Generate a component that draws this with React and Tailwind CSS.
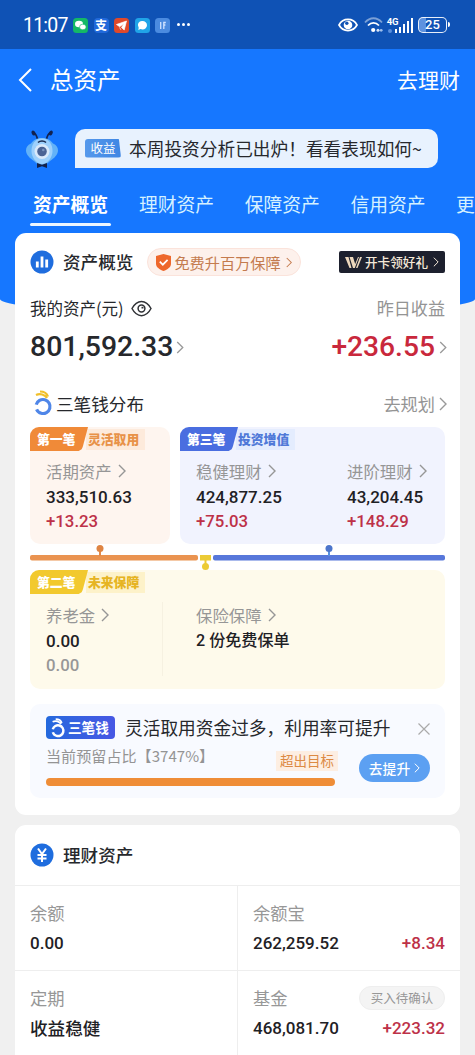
import React from 'react'

const Chevron = ({ className }) => (
    <svg viewBox="0 0 8 14" fill="none" stroke="currentColor" className={className}>
        <path d="M1 1l6 6-6 6" strokeWidth="1.4" />
    </svg>
)

const Num = ({ className = '', children }) => (
    <span className={`font-[Roboto,'Noto_Sans_CJK_SC',sans-serif] font-medium ${className}`}>{children}</span>
)

const StatusBar = () => (
    <div className="h-[49px] bg-[#0f52b5] flex items-center pl-[23px] pr-[25px] text-white">
        <span className="font-[Roboto,sans-serif] text-[19.5px] w-[45px] whitespace-nowrap tracking-[-0.8px] mt-0.5">11:07</span>
        <div className="flex items-center gap-[5.5px] ml-[5px] mt-px">
            <svg viewBox="0 0 15 15" className="w-[15px] h-[15px]">
                <rect width="15" height="15" rx="3.5" fill="#14b866" />
                <ellipse cx="6" cy="6" rx="4" ry="3.3" fill="#fff" />
                <ellipse cx="9.8" cy="9" rx="3.3" ry="2.8" fill="#fff" stroke="#14b866" strokeWidth=".6" />
            </svg>
            <div className="w-[15px] h-[15px] rounded-[4px] bg-[#2169da] flex items-center justify-center text-[12px] leading-none font-bold">支</div>
            <svg viewBox="0 0 15 15" className="w-[15px] h-[15px]">
                <rect width="15" height="15" rx="3.5" fill="#e0492a" />
                <path d="M2.5 6.5L12.5 3l-2.3 9-2.7-2.5 2.5-4-4.3 3.2zM5.6 9.5l1.3 2.3" fill="#fff" stroke="#fff" strokeWidth=".7" />
            </svg>
            <svg viewBox="0 0 15 15" className="w-[15px] h-[15px]">
                <rect width="15" height="15" rx="3.5" fill="#20a4e8" />
                <path d="M7.5 3a4.5 4.2 0 110 8.4 5 5 0 01-2-.4L3.3 12l.4-2.3A4.2 4.2 0 017.5 3z" fill="#fff" />
            </svg>
            <svg viewBox="0 0 15 15" className="w-[15px] h-[15px]">
                <rect width="15" height="15" rx="3.5" fill="#4b8be0" />
                <path d="M5.7 4v7M8.8 11V4.500h2M8.8 7h1.6" fill="none" stroke="#cfe2ff" strokeWidth="1.3" />
            </svg>
        </div>
        <div className="flex gap-[2.5px] ml-[7px]">
            <i className="w-[2.5px] h-[2.5px] rounded-full bg-white" />
            <i className="w-[2.5px] h-[2.5px] rounded-full bg-white" />
            <i className="w-[2.5px] h-[2.5px] rounded-full bg-white" />
        </div>
        <svg viewBox="0 0 20 14" className="w-5 h-[14px] ml-auto" fill="none" stroke="#fff">
            <path d="M1 7c4-7.4 14-7.4 18 0-4 7.4-14 7.4-18 0z" strokeWidth="1.7" />
            <circle cx="10" cy="7" r="4.3" fill="#fff" stroke="none" />
            <circle cx="8.8" cy="5.2" r="1.7" fill="#0f52b5" stroke="none" />
        </svg>
        <svg viewBox="0 0 19 16" className="w-[19px] h-4 ml-[6px]" fill="none" stroke="#fff" strokeWidth="1.8">
            <path d="M1 5.5C6-.2 13-.2 18 5.5" opacity=".45" />
            <path d="M4 8.5c3.4-3.6 7.6-3.6 11 0" />
            <circle cx="9.2" cy="13" r="2.1" fill="#fff" stroke="none" />
            <circle cx="14" cy="13.3" r="1.5" fill="#d7e4f8" stroke="none" />
            <circle cx="17.2" cy="13.3" r="1.4" fill="#9fbfec" stroke="none" />
        </svg>
        <div className="flex items-end ml-[4px] h-4">
            <div className="w-[11px] h-4 flex flex-col justify-between">
                <span className="font-[Roboto,sans-serif] font-bold text-[9.5px] leading-[9px]">4G</span>
                <i className="w-1 h-1 ml-px bg-[#5a8fdd] rounded-sm" />
            </div>
            <div className="flex items-end gap-[1.6px] -ml-[3px]">
                <i className="w-[2.4px] h-[3.5px] bg-white" />
                <i className="w-[2.4px] h-[6px] bg-white" />
                <i className="w-[2.4px] h-[8.5px] bg-white" />
                <i className="w-[2.4px] h-[11.5px] bg-white" />
                <i className="w-[2.4px] h-[15px] bg-white" />
            </div>
        </div>
        <div className="flex items-center ml-[5px]">
            <div className="w-[29px] h-4 rounded-[5px] border-[1.5px] border-white/90 bg-linear-to-r from-[#5d92df] from-25% to-transparent to-25% flex items-center justify-center font-[Roboto,sans-serif] font-medium text-[13px]">25</div>
            <i className="w-[2px] h-[5px] bg-white ml-px rounded-r" />
        </div>
    </div>
)

const Mascot = () => (
    <svg viewBox="0 0 34 40" className="w-[34px] h-10">
        <path d="M12.500 10C11.500 6 10.500 4.500 8.500 3.500M21.500 10c1-4 2-5.500 4-6.500" fill="none" stroke="#12224f" strokeWidth="1.700" />
        <ellipse cx="8.500" cy="4" rx="1.800" ry="2.600" transform="rotate(-30 8.500 4)" fill="#12224f" />
        <ellipse cx="25.800" cy="4" rx="1.800" ry="2.600" transform="rotate(30 25.800 4)" fill="#12224f" />
        <path d="M17 9c6 0 9 2.500 11 5.500 3.500 1.500 5 4 5 7 0 4-4 8-8 10.500-3 3-5.500 4.500-8 4.500S12 35 9 32C5 29.500 1 25.500 1 21.500c0-3 1.500-5.500 5-7C8 11.500 11 9 17 9z" fill="#63b2f8" />
        <path d="M17 9.500c7 0 10.500 6 10.500 12.500S22.500 35 17 35 6.500 28.500 6.500 22 10 9.500 17 9.500z" fill="#9dd0fc" />
        <path d="M13 13.500c2-2 6-2 8 0" fill="none" stroke="#1b2c50" strokeWidth="1.500" />
        <circle cx="17" cy="22.500" r="7.500" fill="#d9e9fa" />
        <circle cx="17" cy="22.500" r="4.800" fill="#4a6395" />
        <circle cx="18.300" cy="21" r="1.300" fill="#7893bd" />
        <path d="M12 34l5 1.800 5-1.800v5l-5-1.800-5 1.800z" fill="#14224a" />
    </svg>
)

const TABS = ['理财资产', '保障资产', '信用资产']

const Header = () => (
    <div className="text-white">
        <div className="h-[62px] flex items-center pl-[18px] pr-[15px]">
            <svg viewBox="0 0 14 24" className="w-[14px] h-6" fill="none" stroke="#fff" strokeWidth="2">
                <path d="M13 1L2 12l11 11" />
            </svg>
            <span className="ml-[18px] text-[23.5px]">总资产</span>
            <span className="ml-auto text-[21px]">去理财</span>
        </div>
        <div className="h-[75px] pt-[18px] pl-[25px] flex items-start">
            <Mascot />
            <div className="ml-4 w-[363px] h-[39px] rounded-[10px] rounded-bl-none bg-[#e8f2fe] flex items-center pl-[10px] text-[#26282d] whitespace-nowrap">
                <span className="w-[36px] h-[19px] -mt-px bg-linear-to-r from-[#5599ec] to-[#3f86e3] [clip-path:polygon(0_0,94%_0,100%_100%,0_100%)] rounded-[3px] text-white text-[12.5px] leading-[18px] text-center">收益</span>
                <span className="ml-[8px] text-[17.7px] -mt-px">本周投资分析已出炉！看看表现如何~</span>
            </div>
        </div>
        <div className="h-[47px] pl-[30px] flex items-start whitespace-nowrap text-[18.8px] leading-[36px] overflow-hidden text-[#d5f1ff]">
            <div className="w-[81px] shrink-0 mr-[28px] text-center font-bold text-white">
                资产概览
                <div className="h-[3px] rounded bg-[#eef7ff] mt-px" />
            </div>
            {TABS.map(t => <span key={t} className="w-[105.7px] shrink-0">{t}</span>)}
            <span>更</span>
        </div>
    </div>
)

const Tag = ({ color, soft, text, name, label }) => (
    <div className="flex items-center h-6">
        <div className={`w-[58px] h-6 pl-[7px] rounded-tl-[9px] [clip-path:polygon(0_0,100%_0,91%_82%,89%_93%,84%_100%,0_100%)] text-white text-[12.8px] leading-[23px] font-black ${color}`}>{name}</div>
        <div className={`w-[59px] h-[21px] -ml-[2px] pl-[2px] text-[12.8px] leading-[19px] font-black ${soft} ${text}`}>{label}</div>
    </div>
)

const Item = ({ label, value, delta, muted, valueSize = 'text-[17px]' }) => (
    <div className="whitespace-nowrap">
        <div className="h-[26px] flex items-center text-[16.4px] leading-6 text-[#969696]">
            {label}<Chevron className="w-[8px] h-[14px] ml-[6px]" />
        </div>
        <Num className={`block h-[25px] leading-[26px] text-[#1f2125] ${valueSize}`}>{value}</Num>
        <Num className={`block h-[23px] leading-[24px] text-[16.8px] ${muted ? 'text-[#979797]' : 'text-[#bd3148]'}`}>{delta}</Num>
    </div>
)

const RingLogo = ({ className, ring, top }) => (
    <svg viewBox="0 0 20 26" className={className} fill="none">
        <circle cx="10" cy="16.500" r="7" stroke={ring} strokeWidth="3.200" strokeDasharray="39 5" transform="rotate(-165 10 16.5)" />
        <path d="M3 5c4-2 9-.5 11 3M7 1.500c4 0 7 2 8 5" stroke={top} strokeWidth="2.200" />
    </svg>
)

const Timeline = () => (
    <svg viewBox="0 0 415 26" className="w-[415px] h-[26px]">
        <rect y="11" width="168" height="5.500" rx="2" fill="#ea9350" />
        <rect x="183" y="11" width="232" height="5.500" rx="2" fill="#5777da" />
        <rect x="170" y="11" width="11" height="5.500" fill="#eccb35" />
        <path d="M70 4v8" stroke="#e28a4a" strokeWidth="2" />
        <circle cx="70" cy="4.500" r="3.500" fill="#df8442" />
        <path d="M299 4v8" stroke="#5790de" strokeWidth="2" />
        <circle cx="299" cy="4.500" r="3.500" fill="#4c75cb" />
        <path d="M175.500 15v6" stroke="#eccb35" strokeWidth="2" />
        <circle cx="175.500" cy="22.500" r="3.500" fill="#eccb35" />
    </svg>
)

const Overview = () => (
    <div className="mx-[15px] h-[582px] bg-white rounded-[11px] px-[15px] text-[#26282c]">
        <div className="pt-[15px] flex items-center">
            <svg viewBox="0 0 24 24" className="w-6 h-6">
                <circle cx="12" cy="12" r="11.500" fill="#1f6dde" />
                <path d="M7.300 11.500v6M12 6.500v11M16.700 9.500v8" stroke="#fff" strokeWidth="2.800" />
            </svg>
            <span className="ml-[9px] text-[17.6px] leading-7 font-medium">资产概览</span>
            <div className="ml-[14px] w-[154px] h-[28px] rounded-full border border-[#fbe3db] bg-[#fdf1ec] flex items-center pl-[8px] text-[15.2px] text-[#c47b4e] whitespace-nowrap">
                <svg viewBox="0 0 15 17" className="w-[15px] h-[17px] mr-[3px]">
                    <path d="M7.500 0L15 2v8c0 3-3.500 5.500-7.500 7C3.500 15.500 0 13 0 10V2z" fill="#ee682c" />
                    <path d="M3.800 7.700l3 3 4.800-4.900" fill="none" stroke="#fff" strokeWidth="1.700" />
                </svg>
                免费升百万保障<Chevron className="w-[6px] h-[11px] ml-[5px]" />
            </div>
            <div className="ml-auto w-[106px] h-[22px] rounded-[2px] bg-[#1d202e] flex items-center pl-[6px] text-[12.6px] text-[#f5e9d8] font-medium whitespace-nowrap">
                <svg viewBox="0 0 17 11" className="w-[17px] h-[11px] mr-[3px]" fill="#ecd7bc">
                    <path d="M0 0h3.500l3 11H4.500zM4.500 0H8l2.200 7L13 0h1L9.800 11H8zM15 0h2l-4.500 11H11z" />
                </svg>
                开卡领好礼<Chevron className="w-[6px] h-[10px] ml-[5px]" />
            </div>
        </div>

        <div className="mt-[19px] h-[26px] flex items-center text-[16.5px]">
            <span>我的资产(元)</span>
            <svg viewBox="0 0 21 17" className="w-[21px] h-[17px] ml-[7px]" fill="none" stroke="#303236" strokeWidth="1.500">
                <path d="M1 8.500c5-9.500 14-9.500 19 0-5 9.500-14 9.500-19 0z" />
                <circle cx="10.500" cy="8.500" r="3.400" />
                <path d="M10.500 8.500V6.800h2v1.700z" fill="#303236" stroke="none" />
            </svg>
            <span className="ml-auto text-[17.1px] text-[#949494]">昨日收益</span>
        </div>
        <div className="mt-[4px] h-[44px] flex items-center">
            <Num className="text-[28.4px]">801,592.33</Num>
            <Chevron className="w-[8px] h-[13px] ml-[3px] text-[#999]" />
            <Num className="ml-auto text-[28.2px] text-[#c9283c]">+236.55</Num>
            <Chevron className="w-[8px] h-[13px] ml-[4px] -mr-[2px] text-[#999]" />
        </div>
        <div className="mt-[21px] h-[28px] flex items-center text-[17.6px]">
            <RingLogo className="w-5 h-[26px] ml-[3px] mr-[3px] -mt-0.5" ring="#4f86e8" top="#f1c02c" />
            三笔钱分布
            <span className="ml-auto text-[#949494] text-[17.2px]">去规划</span>
            <Chevron className="w-[8px] h-[14px] ml-[4px] -mr-[2px] text-[#999]" />
        </div>

        <div className="mt-[9px] flex gap-[10px]">
            <div className="w-[140px] h-[117px] rounded-[10px] bg-[#fef5ef]">
                <Tag color="bg-[#f08a38]" soft="bg-[#fdeadb]" text="text-[#e89248]" name="第一笔" label="灵活取用" />
                <div className="pt-[7px] pl-4">
                    <Item label="活期资产" value="333,510.63" delta="+13.23" />
                </div>
            </div>
            <div className="w-[265px] h-[117px] rounded-[10px] bg-[#f1f3fe]">
                <Tag color="bg-[#4a6ee0]" soft="bg-[#e4ecfe]" text="text-[#5079d8]" name="第三笔" label="投资增值" />
                <div className="pt-[7px] pl-4 flex">
                    <div className="w-[151px]">
                        <Item label="稳健理财" value="424,877.25" delta="+75.03" />
                    </div>
                    <Item label="进阶理财" value="43,204.45" delta="+148.29" />
                </div>
            </div>
        </div>
        <Timeline />
        <div className="h-[119px] rounded-[10px] bg-[#fefaeb]">
            <Tag color="bg-[#f2c92e]" soft="bg-[#fdf2c9]" text="text-[#e6b422]" name="第二笔" label="未来保障" />
            <div className="pt-[8px] pl-4 flex">
                <div className="w-[117px] border-r border-[#f6f1e1]">
                    <Item label="养老金" value="0.00" delta="0.00" muted />
                </div>
                <div className="pl-[33px]">
                    <Item label="保险保障" value="2 份免费保单" valueSize="text-[16.1px]" />
                </div>
            </div>
        </div>

        <div className="mt-[15px] h-[94px] rounded-[10px] bg-[#f8faff] pl-4 pr-[15px] pt-[11px]">
            <div className="flex items-center h-6 whitespace-nowrap">
                <div className="w-[69px] h-[23px] mt-px rounded-[4px] bg-linear-to-r from-[#2369dd] to-[#4657e4] flex items-center pl-[4px] text-white text-[13.6px] font-bold">
                    <RingLogo className="w-[16px] h-[20px] mr-[2px]" ring="#fff" top="#fff" />三笔钱
                </div>
                <span className="ml-[10px] text-[17.7px]">灵活取用资金过多，利用率可提升</span>
                <svg viewBox="0 0 12 12" className="w-3 h-3 ml-auto mt-1" stroke="#aaa" strokeWidth="1.200">
                    <path d="M.5.5l11 11M11.500.5l-11 11" />
                </svg>
            </div>
            <div className="flex">
                <div className="w-[292px]">
                    <div className="flex items-start h-[39px] whitespace-nowrap">
                        <span className="text-[15.1px] leading-[32px] text-[#949494]">当前预留占比【3747%】</span>
                        <span className="ml-auto mt-[12px] h-[20px] px-[4px] bg-[#fdeee2] text-[13.5px] leading-[19px] text-[#dc8a44]">超出目标</span>
                    </div>
                    <div className="w-[289px] h-[8px] rounded-full bg-[#ef8d37]" />
                </div>
                <div className="ml-auto mt-[15px] w-[71px] h-[28px] rounded-full bg-[#5ca0f2] flex items-center justify-center text-white text-[13.8px] font-medium">
                    去提升<Chevron className="w-[6px] h-[10px] ml-[4px]" />
                </div>
            </div>
        </div>
    </div>
)

const Cell = ({ label, value, delta, badge, valueSize = 'text-[17px]' }) => (
    <div className="h-[85px] border-t border-[#eeeeee] pl-[15px] pr-[15px] pt-[13px]">
        <div className="h-[27px] flex items-center text-[17.3px] text-[#979797]">
            {label}
            {badge && <span className="ml-auto w-[86px] h-6 rounded-full bg-[#f4f4f4] border border-[#eeeeee] text-center text-[12.5px] leading-[22px]">{badge}</span>}
        </div>
        <div className="h-[36px] flex items-center justify-between text-[#1f2125]">
            <Num className={valueSize}>{value}</Num>
            {delta && <Num className="text-[17px] text-[#bd3148]">{delta}</Num>}
        </div>
    </div>
)

const Wealth = () => (
    <div className="mx-[15px] mt-[10px] bg-white rounded-t-[11px]">
        <div className="h-[60px] pl-[15px] flex items-center text-[#26282c]">
            <svg viewBox="0 0 24 24" className="w-6 h-6" fill="none" stroke="#fff" strokeWidth="2">
                <circle cx="12" cy="12" r="11.500" fill="#1f6dde" stroke="none" />
                <path d="M8 5.500l4 5.500 4-5.500M12 11v8M7.500 12h9M7.500 15.500h9" />
            </svg>
            <span className="ml-[9px] text-[17.6px] font-medium">理财资产</span>
        </div>
        <div className="grid grid-cols-[223px_222px]">
            <div className="border-r border-[#eeeeee]">
                <Cell label="余额" value="0.00" />
                <Cell label="定期" value="收益稳健" valueSize="text-[17.6px]" />
            </div>
            <div>
                <Cell label="余额宝" value="262,259.52" delta="+8.34" />
                <Cell label="基金" value="468,081.70" delta="+223.32" badge="买入待确认" />
            </div>
        </div>
    </div>
)

export default function App() {
    return (
        <div className="relative isolate w-[475px] h-[1055px] overflow-hidden bg-[#f0f0f0] font-['Noto_Sans_CJK_SC',sans-serif]">
            {/* blue backdrop with a curved bottom edge */}
            <div className="absolute -z-10 top-0 left-0 w-full h-[315px] bg-[#1677ff] rounded-b-[50%_16px]" />
            <StatusBar />
            <Header />
            <Overview />
            <Wealth />
        </div>
    )
}
